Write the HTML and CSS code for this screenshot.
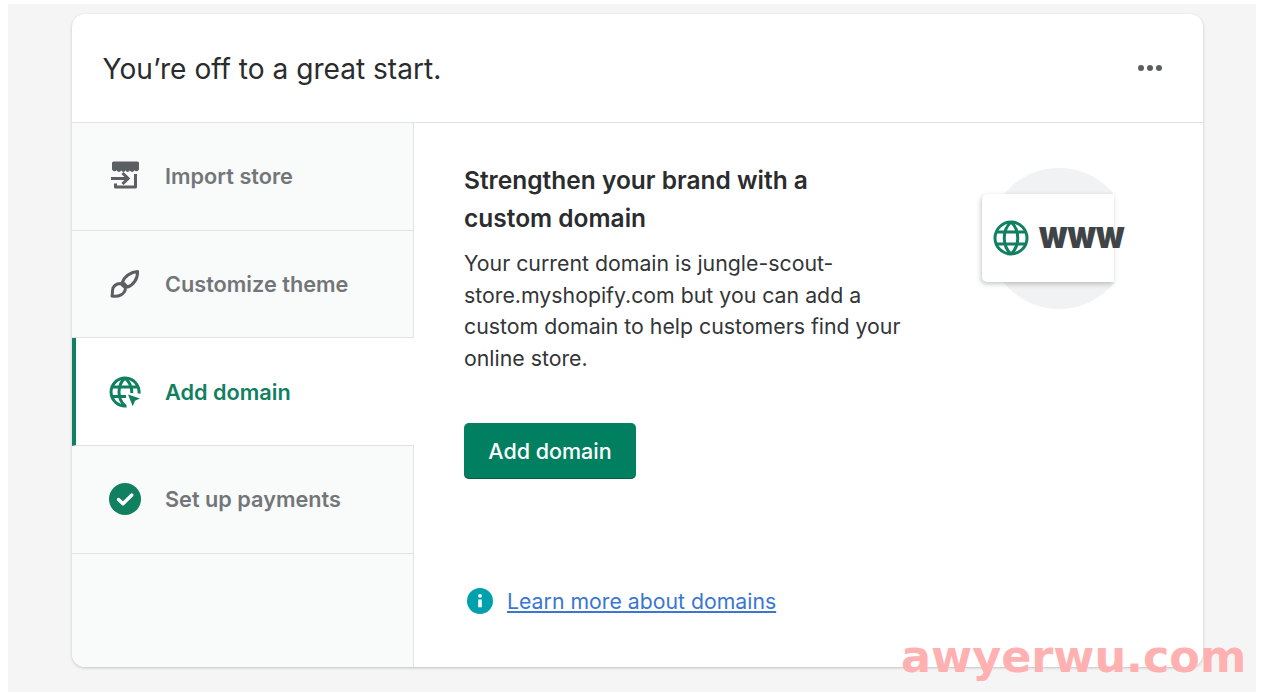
FILE: index.html
```html
<!DOCTYPE html>
<html lang="en">
<head>
<meta charset="utf-8">
<title>Setup guide</title>
<link rel="stylesheet" href="styles.css">
</head>
<body>
<main class="canvas">
  <section class="card">
    <header class="card-head">
      <h1 class="title">You’re off to a great start.</h1>
      <button class="more" aria-label="More"><span></span><span></span><span></span></button>
    </header>
    <div class="card-body">
      <nav class="side">
        <a class="step">
          <svg class="ico" viewBox="0 0 32 32"><path fill="#5c5f62" d="M3.500 1.500h25a1.500 1.500 0 0 1 1.500 1.500v6.500c-1 2-3.300 2.400-4.700.8-1 2.200-3.400 2.200-4.500 0-1 2.200-3.300 2.200-4.300 0-1 2.200-3.300 2.200-4.300 0-1 2.200-3.400 2.200-4.500 0-1.400 1.600-3.700 1.200-4.700-.8V3a1.500 1.500 0 0 1 1.500-1.500z"/><path fill="none" stroke="#5c5f62" stroke-width="3" stroke-linejoin="round" d="M26.500 14v13H6.500v-3.500"/><path fill="none" stroke="#5c5f62" stroke-width="3" d="M2 18.500h17M13.500 13l5.600 5.500-5.600 5.500"/></svg>
          <span>Import store</span>
        </a>
        <a class="step">
          <svg class="ico" viewBox="0 0 32 32"><g fill="none" stroke="#5c5f62" stroke-width="3" stroke-linejoin="round"><path d="M28.500 3.500c-6.500.5-13 4.500-15 10.500l5 5c6-2 10.500-8.500 10-15.500z"/><path d="M11.500 15.500c-4.500 0-8 3-8 7 0 2.500 0 4-.5 5.500 6.500 1.200 13-1.500 13.500-8z"/></g></svg>
          <span>Customize theme</span>
        </a>
        <a class="step active">
          <svg class="ico" viewBox="0 0 32 32"><g fill="none" stroke="#108060" stroke-width="3"><path d="M17.500 30A14 14 0 1 1 30 17.500"/><path d="M16 2c-8 7-8 21 0 28M16 2c5 4.500 7 10 6.800 15M3 11h26M3 20.500h14"/></g><path fill="#108060" d="M19 18.500l12 4-5 2.300-2.300 5.400z"/></svg>
          <span>Add domain</span>
        </a>
        <a class="step">
          <svg class="ico" viewBox="0 0 32 32"><circle cx="16" cy="16" r="16" fill="#108060"/><path fill="none" stroke="#fff" stroke-width="3.400" stroke-linecap="round" stroke-linejoin="round" d="M9.500 16.500l4.500 4.300 8.800-8.800"/></svg>
          <span>Set up payments</span>
        </a>
        <div class="side-fill"></div>
      </nav>
      <div class="content">
        <div class="top">
          <div class="copy">
            <h2 class="heading">Strengthen your brand with a custom domain</h2>
            <p class="text">Your current domain is jungle-scout-store.myshopify.com but you can add a custom domain to help customers find your online store.</p>
            <button class="primary">Add domain</button>
          </div>
          <div class="art">
            <div class="disc"></div>
            <div class="www">
              <svg class="globe" viewBox="0 0 36 36"><g fill="none" stroke="#108060" stroke-width="3"><circle cx="18" cy="18" r="16"/><path d="M18 2c-9 8-9 24 0 32M18 2c9 8 9 24 0 32M4 12h28M4 24h28"/></g></svg>
              <span class="www-text">www</span>
            </div>
          </div>
        </div>
        <div class="learn">
          <svg class="info" viewBox="0 0 26 26"><circle cx="13" cy="13" r="13" fill="#00a0ac"/><circle cx="13" cy="7.800" r="1.900" fill="#fff"/><path fill="#fff" d="M11.200 11.500h3.600v7.800h-3.600z"/></svg>
          <a class="link">Learn more about domains</a>
        </div>
      </div>
    </div>
  </section>
</main>
<div class="mark">awyerwu.com</div>
</body>
</html>
```
FILE: styles.css
```css
* { box-sizing: border-box; }
html { background: #fff; }
body { margin: 0; height: 694px; padding: 4px 6px 2px 8px; font-family: Inter, "Noto Sans", sans-serif; overflow: hidden; position: relative; }
.canvas { background: #f5f5f5; height: 100%; padding: 10px 53px 25px 64px; }
.card { background: #fff; height: 100%; border-radius: 13px; box-shadow: 0 1px 3px rgba(60,66,70,.28); display: flex; flex-direction: column; overflow: hidden; }
.card-head { height: 109px; flex: none; border-bottom: 1px solid #e1e3e5; display: flex; align-items: center; justify-content: space-between; padding: 2px 41px 0 31px; }
.title { margin: 0 0 0 -0.5px; font-size: 28.100px; font-weight: 400; color: #2a2c2e; }
.more { border: 0; background: none; padding: 0 0 2px; display: flex; gap: 3px; }
.more span { width: 6px; height: 6px; border-radius: 50%; background: #5c5f62; }
.card-body { flex: 1; display: flex; min-height: 0; }
.side { width: 342px; flex: none; background: #f9fafa; border-right: 1px solid #e1e3e5; display: flex; flex-direction: column; }
.step { height: 107.700px; flex: none; display: flex; align-items: center; gap: 24px; padding-left: 37px; border-bottom: 1px solid #e1e3e5; font-size: 21.700px; font-weight: 600; color: #737679; }
.step .ico { width: 32px; height: 32px; flex: none; }
.step.active { background: #fff; color: #108060; border-left: 4px solid #108060; padding-left: 33px; margin-right: -1px; }
.side-fill { flex: 1; }
.content { flex: 1; display: flex; flex-direction: column; padding: 38px 79px 53px 50px; min-width: 0; }
.top { flex: 1; display: flex; justify-content: space-between; }
.copy { width: 440px; }
.heading { margin: 0 0 11px; font-size: 24.500px; line-height: 38px; font-weight: 600; color: #2a2c2e; width: 370px; }
.text { margin: 0; font-size: 21.300px; line-height: 31.500px; color: #333537; }
.primary { margin-top: 49px; width: 172px; height: 56px; background: #008060; border: 0; border-radius: 5px; color: #fff; font: 500 21.500px Inter, sans-serif; box-shadow: inset 0 -1px 0 rgba(0,60,40,.5); }
.art { position: relative; width: 132px; height: 142px; margin-top: 7px; }
.disc { position: absolute; left: -4px; top: 0; width: 142px; height: 141px; border-radius: 50%; background: linear-gradient(90deg, #f1f2f3 0 126px, #fff 126px); }
.www { position: absolute; left: -10px; top: 26px; width: 132px; height: 88px; background: #fff; border-radius: 5px 0 0 5px; box-shadow: -1px 2px 5px rgba(60,66,70,.3); display: flex; align-items: center; gap: 10px; padding-left: 11px; }
.globe { width: 36px; height: 36px; flex: none; }
.www-text { font-size: 32.500px; font-weight: 900; color: #3f4447; line-height: 1; padding-bottom: 4px; transform: scaleY(1.15); }
.learn { display: flex; align-items: center; gap: 14px; padding-left: 3px; }
.info { width: 26px; height: 26px; flex: none; }
.link { color: #3a76d2; font-size: 21.250px; text-decoration: underline; }
.mark { position: absolute; left: 901px; top: 633px; font: 700 44.500px "DejaVu Sans", sans-serif; color: #ffb0b0; line-height: 1.1; white-space: nowrap; }
```
